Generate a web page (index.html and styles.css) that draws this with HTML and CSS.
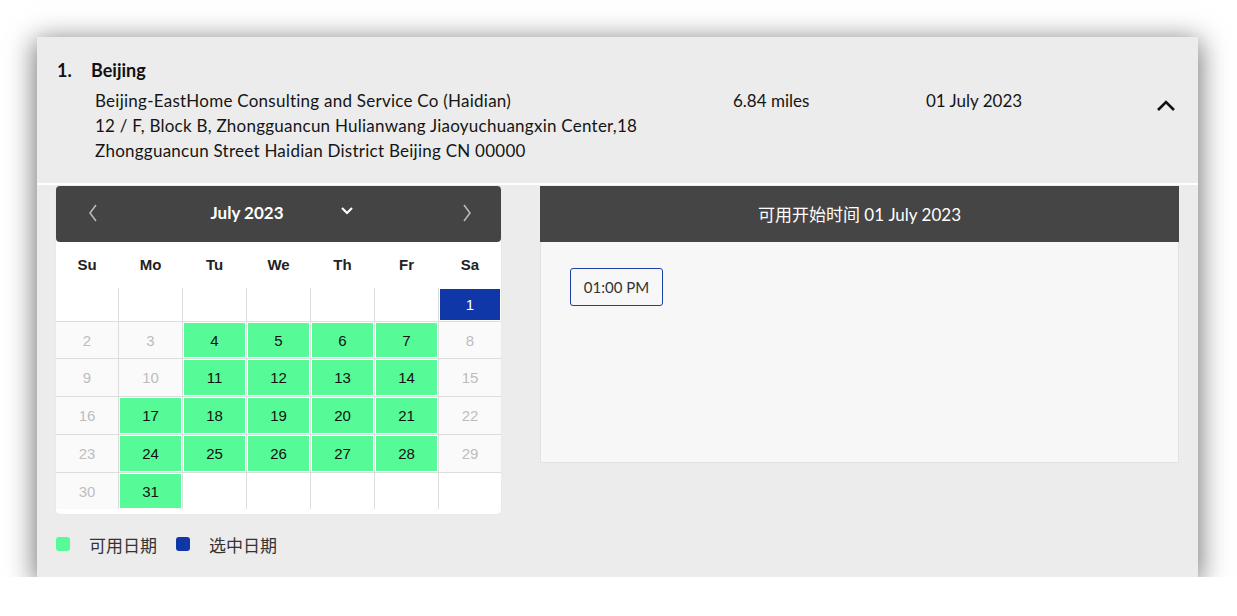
FILE: index.html
```html
<!DOCTYPE html>
<html lang="zh">
<head>
<meta charset="utf-8">
<title>Beijing</title>
<link rel="stylesheet" href="styles.css">
</head>
<body>
<div class="card">
  <div class="loc-head">
    <div class="title"><span class="num">1.</span><span class="name">Beijing</span></div>
    <div class="details">
      <div class="address">Beijing-EastHome Consulting and Service Co (Haidian)<br>12 / F, Block B, Zhongguancun Hulianwang Jiaoyuchuangxin Center,18<br>Zhongguancun Street Haidian District Beijing CN 00000</div>
      <div class="distance">6.84 miles</div>
      <div class="date">01 July 2023</div>
      <div class="toggle"><svg width="20" height="13" viewBox="0 0 20 13"><polyline points="2,11 10,3 18,11" fill="none" stroke="#111" stroke-width="2.6"/></svg></div>
    </div>
  </div>
  <div class="loc-body">
    <div class="cal-col">
      <div class="calendar">
        <div class="cal-head">
          <svg class="nav" width="14" height="20" viewBox="0 0 14 20"><polyline points="10,2 4,10 10,18" fill="none" stroke="#bdbdbd" stroke-width="1.5"/></svg>
          <div class="month"><span>July 2023</span><svg width="14" height="10" viewBox="0 0 14 10"><polyline points="2,2 7,7 12,2" fill="none" stroke="#fff" stroke-width="2.2"/></svg></div>
          <svg class="nav" width="14" height="20" viewBox="0 0 14 20"><polyline points="4,2 10,10 4,18" fill="none" stroke="#bdbdbd" stroke-width="1.5"/></svg>
        </div>
        <div class="weekdays"><span>Su</span><span>Mo</span><span>Tu</span><span>We</span><span>Th</span><span>Fr</span><span>Sa</span></div>
        <div class="days">
          <span class="empty"></span><span class="empty"></span><span class="empty"></span><span class="empty"></span><span class="empty"></span><span class="empty"></span><span class="sel">1</span>
          <span class="off">2</span><span class="off">3</span><span class="av">4</span><span class="av">5</span><span class="av">6</span><span class="av">7</span><span class="off">8</span>
          <span class="off">9</span><span class="off">10</span><span class="av">11</span><span class="av">12</span><span class="av">13</span><span class="av">14</span><span class="off">15</span>
          <span class="off">16</span><span class="av">17</span><span class="av">18</span><span class="av">19</span><span class="av">20</span><span class="av">21</span><span class="off">22</span>
          <span class="off">23</span><span class="av">24</span><span class="av">25</span><span class="av">26</span><span class="av">27</span><span class="av">28</span><span class="off">29</span>
          <span class="off">30</span><span class="av">31</span><span class="empty"></span><span class="empty"></span><span class="empty"></span><span class="empty"></span><span class="empty"></span>
        </div>
      </div>
      <div class="legend">
        <span class="swatch green"></span><span class="label">可用日期</span>
        <span class="swatch blue"></span><span class="label">选中日期</span>
      </div>
    </div>
    <div class="slots">
      <div class="slots-head">可用开始时间 01 July 2023</div>
      <div class="slots-body"><button class="slot">01:00 PM</button></div>
    </div>
  </div>
</div>
</body>
</html>
```
FILE: styles.css
```css
html, body {
  margin: 0;
  background: #fff;
}
body {
  font-family: Lato, "Noto Sans CJK SC", sans-serif;
  color: #111;
}
.card {
  margin: 37px 39px 0 37px;
  height: 540px;
  box-sizing: border-box;
  background: #ececec;
  box-shadow: 0 5px 26px 2px rgba(0, 0, 0, 0.55);
}
.loc-head {
  padding: 21px 20px 20px 20px;
  border-bottom: 2px solid #fff;
}
.title {
  display: flex;
  font-size: 18px;
  font-weight: 700;
  line-height: 24px;
}
.num {
  width: 34px;
}
.details {
  display: grid;
  grid-template-columns: 638px 193px 1fr auto;
  margin-top: 6px;
  padding-left: 38px;
  font-size: 17px;
  line-height: 25px;
  color: #151515;
}
.address {
  letter-spacing: 0.25px;
}
.toggle {
  margin: 11px 2px 0 0;
  height: 13px;
}
.toggle svg {
  display: block;
}
.loc-body {
  display: flex;
  gap: 39px;
  padding: 1px 19px 20px 19px;
  align-items: flex-start;
}
.calendar {
  width: 445px;
  background: #fff;
  border-radius: 4px;
  padding-bottom: 5px;
  box-shadow: 0 0 1px rgba(0, 0, 0, 0.15);
}
.cal-head {
  height: 56px;
  box-sizing: border-box;
  padding: 0 27px 4px 30px;
  background: #444;
  border-radius: 4px;
  display: flex;
  align-items: center;
  justify-content: space-between;
  color: #fff;
}
.nav {
  display: block;
  margin-top: 2px;
}
.month {
  display: flex;
  align-items: center;
  gap: 56px;
  font-weight: 700;
  font-size: 17px;
  margin-left: 4px;
}
.month svg {
  display: block;
  margin-top: -3px;
}
.weekdays,
.days {
  display: grid;
  grid-template-columns: 62px repeat(5, 63px) 62px;
  column-gap: 1px;
}
.weekdays {
  height: 46px;
  padding-bottom: 1px;
  box-sizing: border-box;
  align-items: center;
  text-align: center;
  font: 700 15px "Liberation Sans", Arial, sans-serif;
  color: #222;
}
.days {
  row-gap: 1px;
  background: #ddd;
  grid-template-rows: 33px 36px 37px 37px 37px 36px;
  font: 15px "Liberation Sans", Arial, sans-serif;
}
.days span {
  display: flex;
  align-items: center;
  justify-content: center;
  background: #fff;
}
.days .off {
  background: #fafafa;
  color: #bdbdbd;
}
.days .av {
  background: #56fb98;
  color: #111;
  box-shadow: inset 0 0 0 1px #fff;
}
.days .sel {
  background: #0f37a8;
  color: #fff;
  box-shadow: inset 0 0 0 1px #fff;
}
.legend {
  display: flex;
  align-items: center;
  margin-top: 18px;
  height: 24px;
  font-size: 17px;
  color: #333;
}
.swatch {
  width: 14px;
  height: 14px;
  border-radius: 3px;
  margin-right: 19px;
}
.swatch.green {
  background: #56fb98;
}
.swatch.blue {
  background: #0f37a8;
}
.label {
  margin-right: 19px;
}
.slots {
  width: 639px;
}
.slots-head {
  height: 56px;
  padding-bottom: 1px;
  box-sizing: border-box;
  background: #454545;
  color: #fff;
  font-size: 17px;
  display: flex;
  align-items: center;
  justify-content: center;
}
.slots-body {
  height: 221px;
  box-sizing: border-box;
  background: #f7f7f7;
  border: 1px solid #e2e2e2;
  border-top: none;
  padding: 26px 29px;
}
.slot {
  width: 93px;
  height: 38px;
  border: 1px solid #1d3fa6;
  border-radius: 3px;
  background: transparent;
  font: 15px Lato, sans-serif;
  color: #333;
  padding: 0;
}
```
